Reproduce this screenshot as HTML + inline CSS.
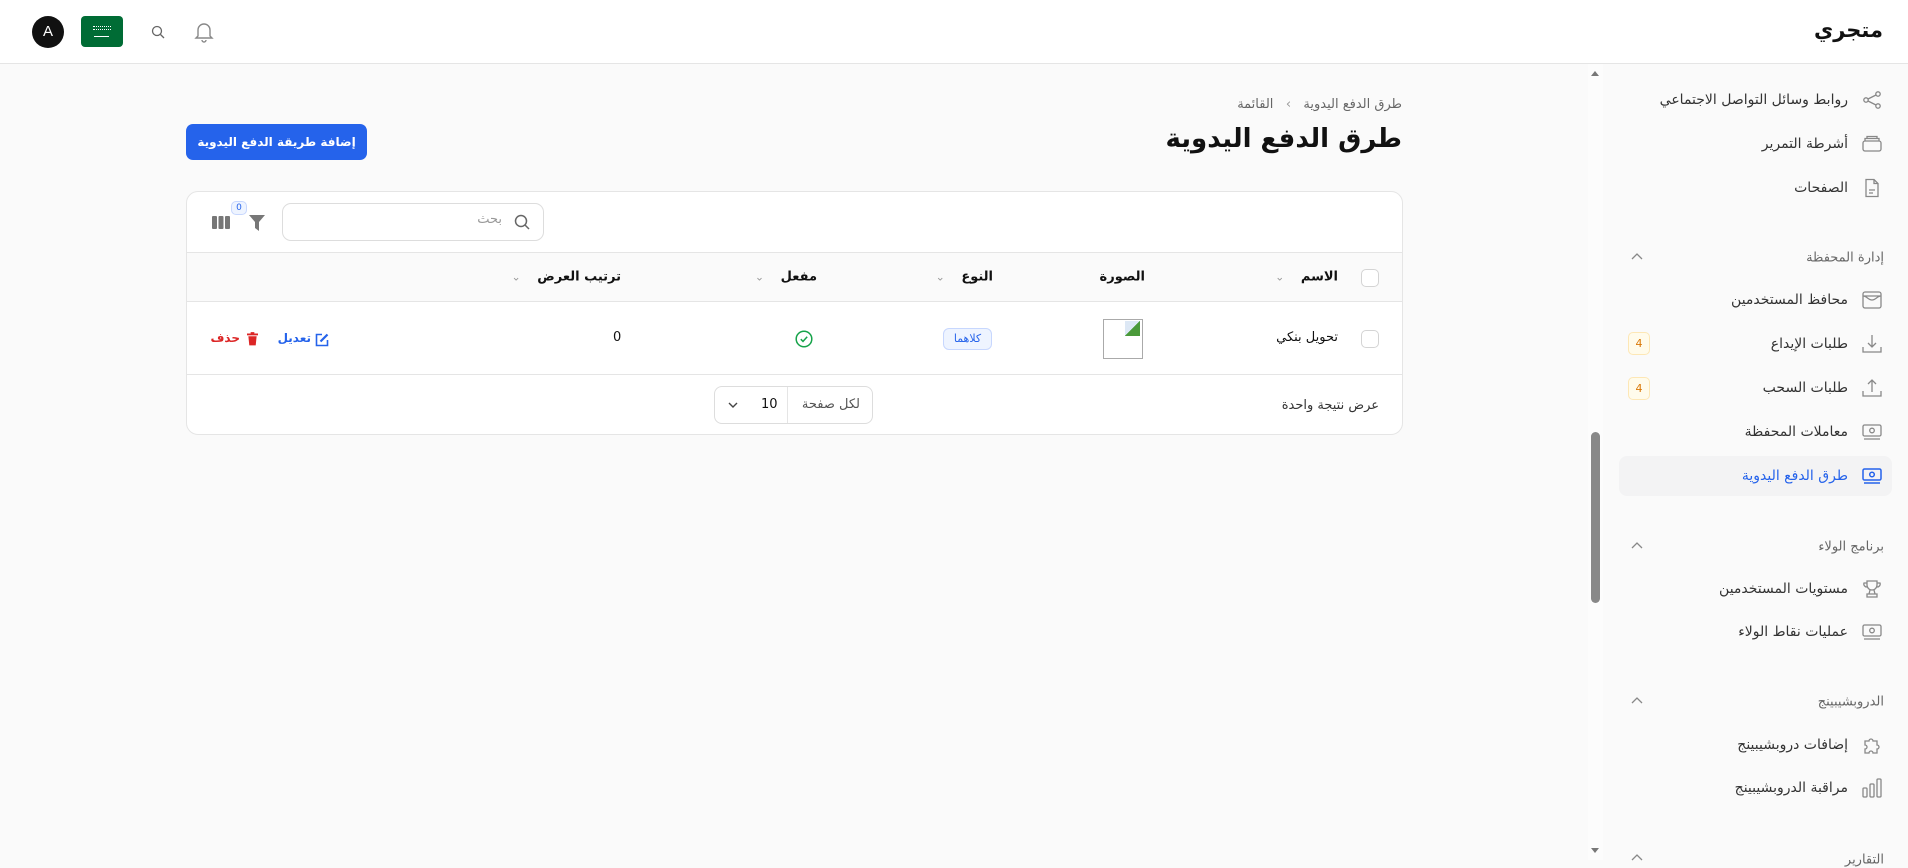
<!DOCTYPE html>
<html dir="rtl"><head><meta charset="utf-8">
<style>
*{box-sizing:border-box;margin:0;padding:0}
body{width:1908px;height:860px;overflow:hidden;background:#fafafa;font-family:"DejaVu Sans","Liberation Sans",sans-serif;color:#111;position:relative}
.a{position:absolute;white-space:nowrap}
.top{position:absolute;left:0;top:0;width:1908px;height:64px;background:#fff;border-bottom:1px solid #e5e5e5}
.side{position:absolute;left:1603px;top:64px;width:305px;height:796px;background:#fafafa}
.item{position:absolute;right:60px;font-size:14px;color:#333;transform:translateY(-50%)}
.ico{position:absolute;left:1862px;width:20px;height:20px;transform:translateY(-50%)}
.grp{position:absolute;right:24px;font-size:13px;color:#666;transform:translateY(-50%)}
.chev{position:absolute;left:1631px;transform:translateY(-50%)}
.badge{position:absolute;left:1628px;width:22px;height:23px;border:1px solid #fde7b5;background:#fffbeb;color:#d97706;border-radius:5px;font-size:11px;text-align:center;line-height:21px}
.card{position:absolute;left:186px;top:191px;width:1217px;height:244px;background:#fff;border:1px solid #e5e5e5;border-radius:12px;overflow:hidden}
.th{position:absolute;font-size:13px;font-weight:bold;transform:translateY(-50%)}
.th span{color:#999;font-weight:normal;font-size:11px;margin-right:12px}
.cb{position:absolute;width:18px;height:18px;border:1px solid #d4d4d4;border-radius:5px;background:#fff}
</style></head><body>
<div class="top"></div>
<div class="a" style="right:25px;top:18px;font-size:21px;font-weight:bold">متجري</div>
<div class="a" style="left:32px;top:16px;width:32px;height:32px;border-radius:50%;background:#111;color:#fff;font-size:15px;text-align:center;line-height:32px;font-family:'Liberation Sans'">A</div>
<div class="a" style="left:81px;top:16px;width:42px;height:31px;border-radius:4px;background:#006c35"><div style="position:absolute;left:12px;top:10px;width:18px;height:4px;border-top:1px dotted #fff;border-bottom:1px dotted #fff"></div><div style="position:absolute;left:13px;top:20px;width:15px;height:1px;background:#fff"></div></div>
<svg class="a" style="left:150px;top:24px" width="16" height="16" viewBox="0 0 16 16" fill="none" stroke="#666" stroke-width="1.3"><circle cx="7" cy="7" r="4.5"/><path d="M10.5 10.5 14 14"/></svg>
<svg class="a" style="left:194px;top:21px" width="20" height="22" viewBox="0 0 20 22" fill="none" stroke="#888" stroke-width="1.4"><path d="M4 15V9a6 6 0 0 1 12 0v6l2 2H2z"/><path d="M8 19a2 2 0 0 0 4 0"/></svg>

<!-- main -->
<div class="a" style="right:506px;top:97px;font-size:13px;color:#666">طرق الدفع اليدوية&nbsp;&nbsp;&nbsp;<span style="color:#999">›</span>&nbsp;&nbsp;&nbsp;القائمة</div>
<div class="a" style="right:506px;top:124px;font-size:26px;font-weight:bold">طرق الدفع اليدوية</div>
<div class="a" style="left:186px;top:124px;width:181px;height:36px;background:#2563eb;border-radius:7px;color:#fff;font-size:12px;font-weight:bold;text-align:center;line-height:36px">إضافة طريقة الدفع اليدوية</div>

<div class="card">
 <div class="a" style="left:95px;top:11px;width:262px;height:38px;border:1px solid #ddd;border-radius:9px"></div>
 <div class="a" style="left:95px;top:20px;width:220px;text-align:right;font-size:13px;color:#999">بحث</div>
 <svg class="a" style="left:326px;top:21px" width="18" height="18" viewBox="0 0 18 18" fill="none" stroke="#666" stroke-width="1.5"><circle cx="8" cy="8" r="5.5"/><path d="M12 12 16 16"/></svg>
 <svg class="a" style="left:62px;top:22px" width="16" height="17" viewBox="0 0 16 17"><path d="M0 1h16L10 8v9L6 14V8z" fill="#777"/></svg>
 <div class="a" style="left:44px;top:9px;width:16px;height:14px;background:#eef4ff;border:1px solid #c7d7fe;border-radius:5px;font-size:9px;color:#2563eb;text-align:center;line-height:12px">0</div>
 <svg class="a" style="left:25px;top:24px" width="18" height="13" viewBox="0 0 18 13" fill="#777"><rect x="0" y="0" width="5" height="13" rx="1"/><rect x="6.5" y="0" width="5" height="13" rx="1"/><rect x="13" y="0" width="5" height="13" rx="1"/></svg>
 <div class="a" style="left:0;top:60px;width:1217px;height:50px;background:#fafafa;border-top:1px solid #e5e5e5;border-bottom:1px solid #e5e5e5"></div>
 <div class="a" style="left:0;top:182px;width:1217px;height:1px;background:#e5e5e5"></div>
 <div class="cb" style="left:1174px;top:77px"></div>
 <div class="th" style="right:64px;top:85px">الاسم <span>⌄</span></div>
 <div class="th" style="right:257px;top:85px">الصورة</div>
 <div class="th" style="right:409px;top:85px">النوع <span>⌄</span></div>
 <div class="th" style="right:585px;top:85px">مفعل <span>⌄</span></div>
 <div class="th" style="right:781px;top:85px">ترتيب العرض <span>⌄</span></div>
 <div class="cb" style="left:1174px;top:138px"></div>
 <div class="a" style="right:64px;top:138px;font-size:13px">تحويل بنكي</div>
 <div class="a" style="left:916px;top:127px;width:40px;height:40px;border:1px solid #aaa"><div style="position:absolute;left:21px;top:1px;width:15px;height:15px;background:linear-gradient(135deg,#dde8f5 50%,#4a9a3a 50%)"></div></div>
 <div class="a" style="left:756px;top:136px;width:49px;height:22px;background:#eef4ff;border:1px solid #c7d7fe;border-radius:6px;font-size:11px;color:#2563eb;text-align:center;line-height:20px">كلاهما</div>
 <svg class="a" style="left:608px;top:138px" width="18" height="18" viewBox="0 0 18 18" fill="none" stroke="#16a34a" stroke-width="1.5"><circle cx="9" cy="9" r="7.8"/><path d="M5.8 9.2l2.2 2.2 4.2-4.6"/></svg>
 <div class="a" style="left:426px;top:138px;font-size:13px">0</div>
 <svg class="a" style="left:128px;top:141px" width="14" height="14" viewBox="0 0 14 14" fill="none" stroke="#2563eb" stroke-width="1.6"><path d="M7 1.5H1.5v11h11V7"/><path d="M5.5 8.5 12.5 1.5" stroke-width="2.2"/></svg>
 <div class="a" style="left:85px;top:139px;width:39px;text-align:right;font-size:12px;color:#2563eb;font-weight:bold">تعديل</div>
 <svg class="a" style="left:60px;top:140px" width="11" height="14" viewBox="0 0 12 15" fill="#dc2626"><rect x="0" y="1.5" width="12" height="2"/><rect x="4" y="0" width="4" height="2"/><path d="M1.5 4.5h9l-1 10h-7z"/></svg>
 <div class="a" style="left:23px;top:139px;width:30px;text-align:right;font-size:12px;color:#dc2626;font-weight:bold">حذف</div>
 <div class="a" style="right:23px;top:206px;font-size:13px;color:#333">عرض نتيجة واحدة</div>
 <div class="a" style="left:527px;top:194px;width:159px;height:38px;border:1px solid #ddd;border-radius:8px"><div style="position:absolute;left:72px;top:0;width:1px;height:36px;background:#e5e5e5"></div><div style="position:absolute;right:12px;top:10px;font-size:13px;color:#555">لكل صفحة</div><div style="position:absolute;left:46px;top:10px;font-size:13px">10</div><svg style="position:absolute;left:13px;top:15px" width="10" height="7" viewBox="0 0 10 7" fill="none" stroke="#444" stroke-width="1.4"><path d="M1 1l4 4 4-4"/></svg></div>
</div>

<!-- sidebar -->
<div class="side"></div>
<div class="a" style="left:1588px;top:64px;width:15px;height:796px;background:#fcfcfc"></div>
<div class="a" style="left:1591px;top:432px;width:9px;height:171px;background:#888;border-radius:5px"></div>
<div class="a" style="left:1591px;top:71px;width:0;height:0;border-left:4.5px solid transparent;border-right:4.5px solid transparent;border-bottom:5px solid #777"></div>
<div class="a" style="left:1591px;top:848px;width:0;height:0;border-left:4.5px solid transparent;border-right:4.5px solid transparent;border-top:5px solid #777"></div>

<svg class="ico" style="top:100px" viewBox="0 0 20 20" fill="none" stroke="#888" stroke-width="1.3"><circle cx="16" cy="4" r="2.2"/><circle cx="4" cy="10" r="2.2"/><circle cx="16" cy="16" r="2.2"/><path d="M6 9 14 5M6 11l8 4"/></svg>
<div class="item" style="top:100px">روابط وسائل التواصل الاجتماعي</div>
<svg class="ico" style="top:144px" viewBox="0 0 20 20" fill="none" stroke="#888" stroke-width="1.3"><rect x="1" y="7" width="18" height="10" rx="2"/><path d="M3 7V4.5h14V7M5 4.5V2.5h10v2"/></svg>
<div class="item" style="top:144px">أشرطة التمرير</div>
<svg class="ico" style="top:188px" viewBox="0 0 20 20" fill="none" stroke="#888" stroke-width="1.3"><path d="M4 1.5h8l4 4v13H4z"/><path d="M12 1.5v4h4M7 12h6M7 15h4"/></svg>
<div class="item" style="top:188px">الصفحات</div>

<div class="grp" style="top:258px">إدارة المحفظة</div>
<svg class="chev" style="top:256px" width="12" height="8" viewBox="0 0 12 8" fill="none" stroke="#888" stroke-width="1.3"><path d="M1 7l5-5 5 5"/></svg>
<svg class="ico" style="top:300px" viewBox="0 0 20 20" fill="none" stroke="#888" stroke-width="1.3"><rect x="1" y="2" width="18" height="16" rx="2"/><path d="M1 6h18M1 6c4 0 5 4 9 4s5-4 9-4"/></svg>
<div class="item" style="top:300px">محافظ المستخدمين</div>
<svg class="ico" style="top:344px" viewBox="0 0 20 20" fill="none" stroke="#888" stroke-width="1.3"><path d="M1 13v5h18v-5M10 1v12M6 9l4 4 4-4"/></svg>
<div class="item" style="top:344px">طلبات الإيداع</div>
<div class="badge" style="top:332px">4</div>
<svg class="ico" style="top:388px" viewBox="0 0 20 20" fill="none" stroke="#888" stroke-width="1.3"><path d="M1 13v5h18v-5M10 14V2M6 6l4-4 4 4"/></svg>
<div class="item" style="top:388px">طلبات السحب</div>
<div class="badge" style="top:377px">4</div>
<svg class="ico" style="top:432px" viewBox="0 0 20 20" fill="none" stroke="#888" stroke-width="1.3"><rect x="1" y="3" width="18" height="11" rx="1.5"/><circle cx="10" cy="8.5" r="2.3"/><path d="M2 17h16"/></svg>
<div class="item" style="top:432px">معاملات المحفظة</div>
<div class="a" style="left:1619px;top:456px;width:273px;height:40px;background:#f3f3f4;border-radius:8px"></div>
<svg class="ico" style="top:476px" viewBox="0 0 20 20" fill="none" stroke="#2563eb" stroke-width="1.5"><rect x="1" y="3" width="18" height="11" rx="1.5"/><circle cx="10" cy="8.5" r="2.3"/><path d="M2 17h16"/></svg>
<div class="item" style="top:476px;color:#2563eb">طرق الدفع اليدوية</div>

<div class="grp" style="top:547px">برنامج الولاء</div>
<svg class="chev" style="top:545px" width="12" height="8" viewBox="0 0 12 8" fill="none" stroke="#888" stroke-width="1.3"><path d="M1 7l5-5 5 5"/></svg>
<svg class="ico" style="top:589px" viewBox="0 0 20 20" fill="none" stroke="#888" stroke-width="1.3"><path d="M5 2h10v4a5 5 0 0 1-10 0zM5 4H2a3 3 0 0 0 3 4M15 4h3a3 3 0 0 1-3 4M8 11l-1 4h6l-1-4M5 15h10v3H5z"/></svg>
<div class="item" style="top:589px">مستويات المستخدمين</div>
<svg class="ico" style="top:632px" viewBox="0 0 20 20" fill="none" stroke="#888" stroke-width="1.3"><rect x="1" y="3" width="18" height="11" rx="1.5"/><circle cx="10" cy="8.5" r="2.3"/><path d="M2 17h16"/></svg>
<div class="item" style="top:632px">عمليات نقاط الولاء</div>

<div class="grp" style="top:702px">الدروبشيبينج</div>
<svg class="chev" style="top:700px" width="12" height="8" viewBox="0 0 12 8" fill="none" stroke="#888" stroke-width="1.3"><path d="M1 7l5-5 5 5"/></svg>
<svg class="ico" style="top:745px" viewBox="0 0 20 20" fill="none" stroke="#888" stroke-width="1.3"><path d="M3 6h4a2 2 0 1 1 4 0h4v4a2 2 0 1 1 0 4v4h-4a2 2 0 1 0-4 0H3v-4a2 2 0 1 0 0-4z"/></svg>
<div class="item" style="top:745px">إضافات دروبشيبينج</div>
<svg class="ico" style="top:788px" viewBox="0 0 20 20" fill="none" stroke="#888" stroke-width="1.3"><rect x="1" y="10" width="4" height="9" rx="1"/><rect x="8" y="6" width="4" height="13" rx="1"/><rect x="15" y="1" width="4" height="18" rx="1"/></svg>
<div class="item" style="top:788px">مراقبة الدروبشيبينج</div>
<div class="grp" style="top:860px">التقارير</div>
<svg class="chev" style="top:857px" width="12" height="8" viewBox="0 0 12 8" fill="none" stroke="#888" stroke-width="1.3"><path d="M1 7l5-5 5 5"/></svg>
</body></html>
